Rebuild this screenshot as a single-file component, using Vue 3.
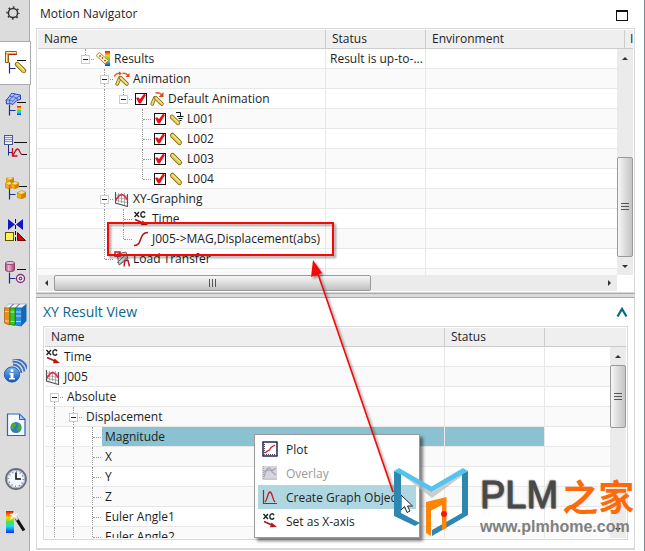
<!--
  Motion Navigator window
  Resource bar, motion tree, XY result view, context menu
-->
<template>
  <div class="app">
    <!-- shared icon symbols -->
    <svg class="defs" aria-hidden="true">
      <defs>
        <linearGradient id="rainbow" x1="0" y1="0" x2="0" y2="1">
          <stop offset="0" stop-color="#f00" /><stop offset=".3" stop-color="#ffd800" />
          <stop offset=".5" stop-color="#4be04b" /><stop offset=".7" stop-color="#18d8f0" /><stop offset="1" stop-color="#1030f0" />
        </linearGradient>
        <linearGradient id="blueBall" x1="0" y1="0" x2="0" y2="1">
          <stop offset="0" stop-color="#7db8ee" /><stop offset="1" stop-color="#0a50b8" />
        </linearGradient>
        <linearGradient id="pinkCan" x1="0" y1="0" x2="1" y2="0">
          <stop offset="0" stop-color="#a8487c" /><stop offset=".35" stop-color="#eab4d2" /><stop offset="1" stop-color="#9a3c70" />
        </linearGradient>
        <symbol id="cube" viewBox="0 0 8 8">
          <path d="M0 2.5L4 4v4L0 6.5z" fill="#f5b000" /><path d="M4 4l4-2v4L4 8z" fill="#cf8500" />
          <path d="M0 2.5L4 .5l4 1.5-4 2z" fill="#ffe07a" />
          <path d="M0 2.5L4 .5l4 1.5v4L4 8 0 6.5zM0 2.5L4 4l4-2M4 4v4" fill="none" stroke="#b87800" stroke-width=".5" />
        </symbol>
        <symbol id="link" viewBox="0 0 16 16">
          <path d="M4.5 4.5l7 7" stroke="#7a6008" stroke-width="5" stroke-linecap="round" />
          <path d="M4.5 4.5l7 7" stroke="#e8cd4c" stroke-width="3.4" stroke-linecap="round" />
          <path d="M4.6 3.8l7 7" stroke="#fff6b0" stroke-width="1" stroke-linecap="round" />
        </symbol>
        <symbol id="arms" viewBox="0 0 16 16">
          <path d="M2.5 12.5l3-7" stroke="#7a6008" stroke-width="4" stroke-linecap="round" />
          <path d="M2.5 12.5l3-7" stroke="#ecd67a" stroke-width="2.4" stroke-linecap="round" />
          <path d="M6.5 5.5l7 7" stroke="#7a6008" stroke-width="4.4" stroke-linecap="round" />
          <path d="M6.5 5.5l7 7" stroke="#e8cd6c" stroke-width="2.8" stroke-linecap="round" />
          <path d="M6.5 5l7 7" stroke="#fff6b0" stroke-width=".8" />
        </symbol>
        <symbol id="bracket" viewBox="0 0 24 24">
          <path d="M6.5 11.5v11M6.5 17.5h6" stroke="#1c2f8c" stroke-width="1.2" fill="none" />
        </symbol>

        <!-- resource bar -->
        <symbol id="gear" viewBox="0 0 24 24">
          <circle cx="10" cy="12" r="4.6" fill="none" stroke="#333" stroke-width="1.5" />
          <circle cx="10" cy="12" r="5.9" fill="none" stroke="#333" stroke-width="1.5" stroke-dasharray="1.7 2.93" stroke-dashoffset=".85" />
        </symbol>
        <symbol id="motion" viewBox="0 0 24 24">
          <path d="M2.5.5h11v3h-8v8h-3z" fill="#e8b04c" stroke="#9c5c10" />
          <path d="M3.5 1.5h10M3.5 4v7" stroke="#fff0b8" /><path d="M5.5 3.5h8" stroke="#a02810" />
          <path d="M14 9.5h9" stroke="#111" />
          <use href="#bracket" /><use href="#link" x="10" y="9" width="15" height="15" />
        </symbol>
        <symbol id="mesh" viewBox="0 0 24 24">
          <path d="M3 7C6 5 7 1.500 9 0c3 1 5 1.500 8.500 2v4.500C15 7 12 8 10 11.500 8 10.500 6 10.500 3.500 11z" fill="#a4bcfa" stroke="#2c3fb4" />
          <path d="M3 7c3 0 5 0 7 1.500C12 5 14 4.500 17 3M7 3.500c3 0 5 .5 7 2M6.500 7l.5 4M12 1l-5.500 6M14 5l.5 3" fill="none" stroke="#3c50c8" stroke-width=".8" />
          <path d="M14 9.500h9" stroke="#111" /><use href="#bracket" />
          <rect x="14" y="13" width="4" height="9" fill="url(#rainbow)" />
        </symbol>
        <symbol id="sheet" viewBox="0 0 24 24">
          <rect x="1.500" y=".5" width="8" height="9" fill="#eef0fa" stroke="#4c5490" />
          <path d="M2 2.500h7M2 4.500h7M2 6.500h7" stroke="#8890c0" /><path d="M11 7.500h13M19 19.500h5" stroke="#111" />
          <path d="M5.500 10v10.500M5.500 17.500h4" fill="none" stroke="#1c2f8c" />
          <path d="M9.500 13v8h5M10 20c2-1 2-6 4.500-6s2 5 4.500 5.500" fill="none" stroke="#c01020" stroke-width="1.300" />
        </symbol>
        <symbol id="cubes" viewBox="0 0 24 24">
          <use href="#cube" x="3" y="-1" width="8" height="8" /><use href="#cube" x="2" y="4" width="8" height="8" />
          <use href="#cube" x="8" y="4" width="8" height="8" /><path d="M16 9.500h8" stroke="#111" />
          <use href="#bracket" /><use href="#cube" x="14" y="13" width="9" height="9" />
        </symbol>
        <symbol id="mirror" viewBox="0 0 24 24">
          <path d="M5 0l7 5.500L5 11zM20 0l-7 5.500L20 11z" fill="#1414c8" />
          <path d="M12.500 0v24" stroke="#111" stroke-dasharray="4 2" />
          <rect x="2.500" y="13.500" width="8" height="8" fill="#fff04c" stroke="#5c5000" />
          <path d="M14.500 13.500v8h8z" fill="#c80c0c" stroke="#6c0808" />
        </symbol>
        <symbol id="barrel" viewBox="0 0 24 24">
          <path d="M2.500 2v7c0 2 9 2 9 0V2z" fill="url(#pinkCan)" stroke="#882c60" stroke-width=".8" />
          <ellipse cx="7" cy="2" rx="4.500" ry="1.600" fill="#f0c4dc" stroke="#882c60" stroke-width=".8" />
          <path d="M14 8.500h9" stroke="#111" /><use href="#bracket" />
          <circle cx="17.500" cy="17.500" r="4" fill="#fff" stroke="#882c78" stroke-width="1.400" />
          <circle cx="17.500" cy="17.500" r="1.400" fill="none" stroke="#882c78" stroke-width="1.200" />
        </symbol>
        <symbol id="books" viewBox="0 0 24 24">
          <path d="M1.500 5l4-4h18l-5 4z" fill="#eef4fa" stroke="#8c9cac" stroke-width=".6" />
          <path d="M1.500 5h5v17l-5-2z" fill="#f08c1c" stroke="#a85c08" stroke-width=".7" />
          <path d="M7 5h5v17.500l-5-1z" fill="#3cc428" stroke="#187808" stroke-width=".7" />
          <path d="M12.500 5h6v18l-6-1z" fill="#2c8ce0" stroke="#0c5094" stroke-width=".7" />
          <path d="M18.500 5l5-4v17l-5 5z" fill="#1468b8" /><path d="M6.500 5l4-4M12.500 5l4-4" stroke="#3c4c5c" />
          <path d="M2 8.500h4M2 18h4" stroke="#ffd898" /><path d="M7.500 9h4M7.500 18.500h4" stroke="#b8f4a0" /><path d="M13 9h5M13 13h5M13 18.500h5" stroke="#a8d8fc" />
        </symbol>
        <symbol id="info" viewBox="0 0 24 24">
          <path d="M10 5.500A9 9 0 0 1 18.500 14M9.500 2.500c7 0 11 4 12 10M9-.5C17-1 23 4 24.500 10" fill="none" stroke="#3c70c0" stroke-width="1.900" />
          <circle cx="9" cy="15.500" r="7.600" fill="url(#blueBall)" stroke="#1c5cac" />
          <circle cx="9" cy="11.500" r="1.500" fill="#fff" /><path d="M6.500 14h4v5H12v1.500H6V19h1.500v-3.500h-1z" fill="#fff" />
        </symbol>
        <symbol id="page" viewBox="0 0 24 24">
          <path d="M4.500 1h12l5.500 5.500V22.500H4.500z" fill="#f4faff" stroke="#2864c0" stroke-width="1.200" />
          <path d="M16.500 1v5.500H22z" fill="#a8ccf4" stroke="#2864c0" />
          <circle cx="13" cy="14.500" r="5.600" fill="#2c7cc8" />
          <path d="M9 11c2-2 4-1 4 1s-3 2-2 5c-3-1-4-4-2-6zM15 10c3 1 3 4 3 6l-3 3c-1-3-2-3 0-5z" fill="#4cac30" />
        </symbol>
        <symbol id="clock" viewBox="0 0 24 24">
          <circle cx="13" cy="12" r="10" fill="#f4f8fe" stroke="#68707c" stroke-width="1.800" />
          <circle cx="13" cy="12" r="8.600" fill="none" stroke="#a8b4c4" />
          <circle cx="13" cy="12" r="7.200" fill="none" stroke="#445" stroke-width="1.200" stroke-dasharray=".8 2.970" />
          <path d="M13 5.500V12h5" fill="none" stroke="#111" stroke-width="1.600" />
        </symbol>
        <symbol id="wand" viewBox="0 0 24 24">
          <rect x="3" y="1" width="8" height="22" fill="url(#rainbow)" />
          <path d="M13 8l8 12.500" stroke="#111" stroke-width="3.200" /><path d="M11.500 5.500l3 4.500" stroke="#c8c8c8" stroke-width="2.600" />
          <path d="M11 0l1 4 4-1-3 3 2 3-4-2-4 3 2-4-3-2 4-.5z" fill="#fff" opacity=".9" />
        </symbol>

        <!-- tree and menu -->
        <symbol id="results" viewBox="0 0 16 16">
          <rect x="10" y="0" width="5" height="15" fill="url(#rainbow)" />
          <path d="M1 4.500l3.500-3 9 8-3.500 3.500z" fill="#fff4d0" stroke="#c08c1c" />
          <path d="M4.500 4.500l1 1M7 6.500l1 1M9.500 9l1 1" stroke="#c02020" stroke-width="1.600" />
        </symbol>
        <symbol id="animation" viewBox="0 0 16 16">
          <use href="#arms" y="2" width="16" height="14" />
          <path d="M0 5.500C2 2.500 4 2 6 2.500M8.500 2.500C11 2 12.500 2.500 14 4.500" fill="none" stroke="#e86030" stroke-width="1.500" />
          <path d="M15.500 2v4h-4zM5 .5l3 2-3 2z" fill="#e04818" />
        </symbol>
        <symbol id="animationItem" viewBox="0 0 16 16">
          <use href="#arms" y="2" width="16" height="14" />
          <path d="M6.500 2C9 1.500 11 2 12.500 3.500" fill="none" stroke="#e86030" stroke-width="1.700" />
          <path d="M14.500 1v5h-5z" fill="#e04818" />
        </symbol>
        <symbol id="ground" viewBox="0 0 16 16">
          <use href="#link" x="0" y="2" width="14" height="14" />
          <path d="M8 1.500h4.500v4M9 5.500h6.500M10.500 7.500h4M11.500 9.500h2" fill="none" stroke="#111" />
        </symbol>
        <symbol id="graph" viewBox="0 0 16 16">
          <path d="M4.500 2v9.500M7.500 2v10M10.500 2v12M2 4l11.500 1M2 6.500l11.500 2M2 9.500l11.500 2" stroke="#999" stroke-width=".8" />
          <path d="M1.500 1v11l12 3.500V3" fill="none" stroke="#555" stroke-width="1.100" />
          <path d="M2 9c2-3 3-5.500 6-5.500 2 0 3 3 5.500 5" fill="none" stroke="#e8284c" stroke-width="1.700" />
        </symbol>
        <symbol id="axis" viewBox="0 0 16 16">
          <path d="M1.500 1l4.500 5M6 1L1.500 6" stroke="#222" stroke-width="1.400" />
          <path d="M12 2.200C11-.2 7.800.6 7.800 3.500s3.200 3.700 4.200 1.300" fill="none" stroke="#222" stroke-width="1.400" />
          <path d="M2 8.500l8 3.500" stroke="#a01818" stroke-width="1.500" /><path d="M9.500 9.500l5.500 4.500-7 .2z" fill="#c01414" />
        </symbol>
        <symbol id="curve" viewBox="0 0 16 16">
          <path d="M1 14.500c9 .5 4-13 14-13" fill="none" stroke="#b41418" stroke-width="1.500" />
        </symbol>
        <symbol id="load" viewBox="0 0 16 16">
          <path d="M3 3l9-2 2 7-9 6z" fill="#ccc" stroke="#666" /><path d="M3 12l9-9M5 14l9-8" stroke="#777" />
          <path d="M1 1h5v4H1zM10 15.500l1-6h3l1.500 6" fill="none" stroke="#b41c28" stroke-width="1.500" />
        </symbol>
        <symbol id="plot" viewBox="0 0 16 16">
          <rect x="1" y="1" width="14" height="14" fill="#fff" stroke="#141450" stroke-width="1.400" />
          <path d="M2.500 3v10.500H14" fill="none" stroke="#445" stroke-dasharray="1 1" />
          <path d="M3 12l2.500-2 2-1L9 6.500 13 4" fill="none" stroke="#c82020" stroke-width="1.300" />
        </symbol>
        <symbol id="overlay" viewBox="0 0 16 16">
          <rect x="0" y="1" width="15" height="14" fill="#d6d4dc" />
          <path d="M1.500 1v13H15" fill="none" stroke="#aaa8bc" stroke-dasharray="1 1" />
          <path d="M2 12C5 1 8 1 10 7l4 3M2 7c5-5 6 2 12-4" fill="none" stroke="#aaa4b8" stroke-width="1.200" />
        </symbol>
        <symbol id="create" viewBox="0 0 16 16">
          <path d="M1.500 1v13.500H15" fill="none" stroke="#c01818" stroke-width="1.200" />
          <path d="M3 13C6 10 5.500 3 8 3s2 7 5 10" fill="none" stroke="#c01818" stroke-width="1.300" />
        </symbol>
      </defs>
    </svg>

    <!-- resource bar -->
    <nav class="sidebar">
      <button v-for="t in tabs" :key="t.icon" :class="['tab', t.size, { active: tab === t.icon }]" :aria-label="t.label" @click="tab = t.icon">
        <svg class="tab-icon"><use :href="'#' + t.icon" /></svg>
      </button>
    </nav>

    <main class="main">
      <header class="title-bar">
        <h1>Motion Navigator</h1>
        <button class="maximize" aria-label="Maximize"></button>
      </header>

      <!-- motion tree -->
      <section class="grid-box">
        <div class="grid-body nav-body">
          <table class="tree">
            <colgroup><col class="nav-name" /><col class="col-status" /><col /></colgroup>
            <thead>
              <tr><th>Name</th><th>Status</th><th>Environment</th></tr>
            </thead>
            <tbody>
              <tr v-for="(row, i) in navRows" :key="i">
                <td>
                  <div class="node nav-node">
                    <span v-for="(g, n) in row.guides" :key="n" :class="['guide', 'g-' + g]"><button v-if="'xcb'.includes(g)" class="toggle" aria-label="Collapse"></button></span>
                    <label v-if="row.check !== undefined" class="check"><input v-model="row.check" type="checkbox" :aria-label="row.name" /></label>
                    <svg v-if="row.icon" class="icon"><use :href="'#' + row.icon" /></svg>
                    <span class="name">{{ row.name }}</span>
                  </div>
                </td>
                <td>{{ row.status }}</td>
                <td></td>
              </tr>
            </tbody>
          </table>
          <div class="side">
            <div class="side-head"><span class="next-col">I</span></div>
            <div class="vscroll">
              <button class="arrow up" aria-label="Scroll up"></button>
              <div class="vtrack nav-track"><div class="vthumb"><i class="grip"></i></div></div>
              <button class="arrow down" aria-label="Scroll down"></button>
            </div>
          </div>
        </div>
        <div class="hscroll">
          <button class="arrow left" aria-label="Scroll left"></button>
          <div class="htrack"><div class="hthumb"><i class="grip wide"></i></div></div>
          <button class="arrow right" aria-label="Scroll right"></button>
        </div>
      </section>

      <div class="splitter"></div>

      <!-- XY result view -->
      <section class="result">
        <header class="result-head">
          <h2>XY Result View</h2>
          <button class="collapse" aria-label="Collapse"><svg viewBox="0 0 12 12"><path d="M1.500 10.500L6 3l4.500 7.500" fill="none" stroke="#0b6786" stroke-width="2.200" /></svg></button>
        </header>
        <div class="grid-box">
          <div class="grid-body result-body">
            <table class="tree">
              <colgroup><col class="result-name" /><col class="col-status" /><col /></colgroup>
              <thead>
                <tr><th>Name</th><th>Status</th><th></th></tr>
              </thead>
              <tbody>
                <tr v-for="row in resultRows" :key="row.name" :class="{ selected: row.name === selected }" @click="selected = row.name">
                  <td>
                    <div class="node">
                      <span v-for="(g, n) in row.guides" :key="n" :class="['guide', 'g-' + g]"><button v-if="'xcb'.includes(g)" class="toggle" aria-label="Collapse"></button></span>
                      <svg v-if="row.icon" class="icon"><use :href="'#' + row.icon" /></svg>
                      <span class="name">{{ row.name }}</span>
                    </div>
                  </td>
                  <td></td>
                  <td></td>
                </tr>
              </tbody>
            </table>
            <div class="side">
              <div class="side-head"></div>
              <div class="vscroll">
                <button class="arrow up" aria-label="Scroll up"></button>
                <div class="vtrack"><div class="vthumb short"><i class="grip"></i></div></div>
                <button class="arrow down" aria-label="Scroll down"></button>
              </div>
            </div>
          </div>
        </div>
      </section>
    </main>

    <!-- context menu -->
    <div class="menu" role="menu">
      <button v-for="m in menu" :key="m.text" role="menuitem" :disabled="m.disabled" :class="{ hover: m.icon === 'create' }">
        <svg class="icon"><use :href="'#' + m.icon" /></svg>{{ m.text }}
      </button>
    </div>

    <!-- callout box and arrow -->
    <svg class="callout" viewBox="0 0 310 300" aria-hidden="true">
      <rect x="8" y="8" width="225" height="32" fill="none" stroke="#f40808" stroke-width="2" />
      <path d="M293 277L217 56" stroke="#f40808" stroke-width="1.600" />
      <path d="M213 45l9 13-11 4z" fill="#f40808" />
    </svg>
    <svg class="cursor" viewBox="0 0 14 20" aria-hidden="true">
      <path d="M1 1v15l3.500-3.500L7 18.500l3-1.500-2.500-5h5z" fill="#fff" stroke="#223" />
    </svg>

    <!-- watermark -->
    <div class="watermark">
      <svg class="mark" viewBox="0 0 76 70" aria-hidden="true">
        <path d="M7 6l31 18L68 6v2L38 30z" fill="#b8b8b8" opacity=".7" />
        <path d="M0 3l7 3v39l19 10-5 3L0 48zM74 3l-6 3v39L38 62v6l36-21z" fill="#2d87ae" />
        <path d="M0 3l5-3 32.500 18.500L69 0l5 3-36.500 21L6 6z" fill="#54c4ee" />
        <path d="M32 34l5 3v31l-5-3zM32 34l20.500-5v31L48 62V37l-11 5.500V37z" fill="#ff8408" />
        <circle cx="50" cy="46" r="3" fill="#f01818" />
      </svg>
      <div class="mark-text">
        <div class="brand"><span class="latin">PLM</span><span class="han">之家</span></div>
        <div class="site">www.plmhome.com</div>
      </div>
    </div>
  </div>
</template>

<script setup>
import { ref } from 'vue'

const tab = ref('motion')
const selected = ref('Magnitude')

const tabs = [
  { icon: 'gear', label: 'Settings', size: 'first' },
  { icon: 'motion', label: 'Motion Navigator' },
  { icon: 'mesh', label: 'Simulation' },
  { icon: 'sheet', label: 'Post Processing' },
  { icon: 'cubes', label: 'Assembly Navigator' },
  { icon: 'mirror', label: 'Constraint Navigator' },
  { icon: 'barrel', label: 'Part Navigator' },
  { icon: 'books', label: 'Reuse Library', size: 'last' },
  { icon: 'info', label: 'HD3D Tools', size: 'tall' },
  { icon: 'page', label: 'Web Browser', size: 'tall' },
  { icon: 'clock', label: 'History', size: 'tall' },
  { icon: 'wand', label: 'System Materials', size: 'low' },
]

// guides: v line, t branch, l last branch, x/c/b toggle with line both ways/above/below, o empty
const navRows = ref([
  { guides: 'c', icon: 'results', name: 'Results', status: 'Result is up-to-...' },
  { guides: 'ox', icon: 'animation', name: 'Animation' },
  { guides: 'ovc', check: true, icon: 'animationItem', name: 'Default Animation' },
  { guides: 'ovot', check: true, icon: 'ground', name: 'L001' },
  { guides: 'ovot', check: true, icon: 'link', name: 'L002' },
  { guides: 'ovot', check: true, icon: 'link', name: 'L003' },
  { guides: 'ovol', check: true, icon: 'link', name: 'L004' },
  { guides: 'ox', icon: 'graph', name: 'XY-Graphing' },
  { guides: 'ovt', icon: 'axis', name: 'Time' },
  { guides: 'ovl', icon: 'curve', name: 'J005->MAG,Displacement(abs)' },
  { guides: 'ol', icon: 'load', name: 'Load Transfer' },
  { guides: '', name: '' },
])

const resultRows = [
  { guides: '', icon: 'axis', name: 'Time' },
  { guides: '', icon: 'graph', name: 'J005' },
  { guides: 'b', name: 'Absolute' },
  { guides: 'vx', name: 'Displacement' },
  { guides: 'vvt', name: 'Magnitude' },
  { guides: 'vvt', name: 'X' },
  { guides: 'vvt', name: 'Y' },
  { guides: 'vvt', name: 'Z' },
  { guides: 'vvt', name: 'Euler Angle1' },
  { guides: 'vvt', name: 'Euler Angle2' },
]

const menu = [
  { icon: 'plot', text: 'Plot' },
  { icon: 'overlay', text: 'Overlay', disabled: true },
  { icon: 'create', text: 'Create Graph Object' },
  { icon: 'axis', text: 'Set as X-axis' },
]
</script>

<style>
body { background: #fff; }
</style>

<style scoped>
.app { position: relative; display: flex; min-height: 100vh; overflow: hidden; font-family: "Open Sans", "Noto Sans", "Noto Sans CJK SC", sans-serif; font-size: 12px; color: #1e1e1e; }
.app *, .app *::before, .app *::after { box-sizing: border-box; }
.defs { position: absolute; width: 0; height: 0; }
button { padding: 0; border: 0; background: none; font: inherit; color: inherit; }
h1, h2 { margin: 0; font-weight: normal; }

/* resource bar */
.sidebar { flex: none; width: 30px; background: #dcdcdc; border-right: 1px solid #aaa; }
.tab { display: flex; align-items: center; width: 30px; height: 42px; padding-left: 3px; }
.tab-icon { width: 24px; height: 24px; overflow: visible; }
.tab.first { height: 40px; align-items: flex-start; padding-top: 1px; margin-bottom: 2px; }
.tab.last { margin-bottom: 8px; }
.tab.active { background: #fff; outline: 1px solid #aaa; }
.tab.tall { height: 54px; }
.tab.low { height: 32px; }

/* window */
.main { flex: 1; min-width: 0; padding: 0 9px 0 6px; border-right: 1px solid #7c8794; }
.title-bar { display: flex; align-items: center; justify-content: space-between; height: 28px; padding: 0 7px 0 4px; }
.title-bar h1 { font-size: 12px; line-height: 28px; }
.maximize { width: 12px; height: 11px; border: 1px solid #111; border-top-width: 2px; margin-top: 3px; }

/* tree tables */
.grid-box { border: 1px solid #d8d8d8; padding: 1px; background: #fff; }
.grid-body { display: flex; overflow: hidden; }
.nav-body { height: 245px; }
.result-body { height: 210px; }
.tree { flex: 1; min-width: 0; width: 100%; height: max-content; table-layout: fixed; border-collapse: separate; border-spacing: 0; }
.nav-name { width: 288px; }
.result-name { width: 400px; }
.col-status { width: 100px; }
.tree th { height: 19px; padding: 0 6px; background: #efefef; border-right: 1px solid #ccc; border-bottom: 1px solid #ccc; font-weight: normal; line-height: 18px; text-align: left; }
.tree th:last-child { border-right: 0; }
.tree td { height: 20px; padding: 0 4px; border-right: 1px solid #e8e8e8; border-bottom: 1px solid #e8e8e8; line-height: 19px; white-space: nowrap; overflow: hidden; }
.tree td:first-child { padding: 0; }
.tree td:last-child { border-right: 0; }
.tree tr:nth-child(even) td { background: #fafafa; }
.node { display: flex; align-items: center; height: 19px; }
.nav-node { padding-left: 38px; }
.name { flex: 1; padding-left: 3px; }
.icon { flex: none; width: 16px; height: 16px; }
.selected .name, .tree .selected td:nth-child(2) { background: #8bc2d1; }

/* guide lines */
.guide { position: relative; flex: none; display: flex; align-items: center; justify-content: center; width: 19px; height: 20px; margin-bottom: -1px; }
.guide::before, .guide::after { content: ''; position: absolute; }
.guide::before { left: 9px; top: 0; bottom: 0; border-left: 1px dotted #999; }
.guide::after { left: 10px; right: 1px; top: 10px; border-top: 1px dotted #999; }
.g-o::before, .g-o::after, .g-v::after { display: none; }
.g-l::before, .g-c::before { bottom: 10px; }
.g-b::before { top: 10px; }
.toggle { position: relative; z-index: 1; width: 9px; height: 9px; border: 1px solid #ccc; background: linear-gradient(#222, #222) center / 5px 1px no-repeat #fff; }

.check { display: flex; flex: none; justify-content: center; width: 16px; }
.check input { appearance: none; width: 12px; height: 12px; margin: 0; border: 1px solid #111; background: #fff; }
.check input:checked::before { content: ''; display: block; width: 10px; height: 10px; background: #e4141c; clip-path: polygon(0 45%, 22% 38%, 40% 55%, 82% 0, 100% 14%, 48% 100%, 30% 100%); }

/* scroll bars */
.side { flex: none; display: flex; flex-direction: column; width: 16px; }
.side-head { flex: none; height: 19px; background: #efefef; border-bottom: 1px solid #ccc; overflow: hidden; }
.next-col { display: block; margin-left: 7px; padding-left: 5px; border-left: 1px solid #ccc; line-height: 18px; }
.vscroll { flex: 1; display: flex; flex-direction: column; background: #ebebeb; }
.vtrack { flex: 1; display: flex; flex-direction: column; }
.nav-track { justify-content: flex-end; }
.vthumb { display: flex; align-items: center; justify-content: center; height: 100px; border: 1px solid #999; border-radius: 2px; background: linear-gradient(90deg, #f6f6f6, #dcdcdc 50%, #c4c4c8); }
.vthumb.short { height: 63px; }
.grip { width: 8px; height: 8px; background: repeating-linear-gradient(#555 0 1px, transparent 1px 3px); }
.grip.wide { background: repeating-linear-gradient(90deg, #555 0 1px, transparent 1px 3px); }
.hscroll { display: flex; height: 16px; margin-right: 16px; background: #ebebeb; }
.htrack { flex: 1; }
.hthumb { display: flex; align-items: center; justify-content: center; width: 58%; height: 16px; border: 1px solid #999; border-radius: 2px; background: linear-gradient(#f6f6f6, #dcdcdc 50%, #c0c0c4); }
.arrow { flex: none; display: flex; align-items: center; justify-content: center; width: 16px; height: 18px; }
.arrow::before { content: ''; border: 3px solid transparent; }
.up::before { border-top: 0; border-bottom-color: #333; }
.down::before { border-bottom: 0; border-top-color: #333; }
.left, .right { height: 16px; }
.left::before { border-left: 0; border-right-color: #333; }
.right::before { border-right: 0; border-left-color: #333; }

.splitter { height: 5px; background: #dcdcdc; border-top: 1px solid #aaa; border-bottom: 1px solid #aaa; }

/* XY result view */
.result { padding: 0 6px 8px; border: solid #d8d8d8; border-width: 0 1px 2px; }
.result-head { display: flex; align-items: center; justify-content: space-between; height: 28px; }
.result-head h2 { font-size: 14px; line-height: 26px; color: #0b6786; }
.collapse { width: 12px; height: 12px; }
.collapse svg { display: block; width: 12px; height: 12px; }

/* context menu */
.menu { position: absolute; left: 254px; top: 434px; width: 166px; padding: 2px 3px 4px; border: 1px solid #999; background: #fff; box-shadow: 3px 3px 3px rgba(0, 0, 0, 0.5); }
.menu button { display: flex; align-items: center; gap: 8px; width: 100%; height: 24px; padding-left: 4px; white-space: nowrap; }
.menu button:disabled { color: #999; }
.menu .hover { background: #b0d7e1; }

.callout { position: absolute; left: 100px; top: 215px; width: 310px; height: 300px; pointer-events: none; filter: drop-shadow(2px 2px 1px rgba(0, 0, 0, 0.4)); }
.cursor { position: absolute; left: 400px; top: 494px; width: 14px; height: 20px; }

/* watermark */
.watermark { position: absolute; left: 394px; top: 468px; display: flex; gap: 10px; pointer-events: none; }
.mark { flex: none; width: 76px; height: 70px; }
.mark-text { padding-top: 5px; white-space: nowrap; font-family: "Liberation Sans", "Noto Sans CJK SC", sans-serif; }
.brand { display: flex; align-items: center; gap: 4px; height: 44px; }
.latin { font-size: 38px; line-height: 44px; color: #484848; -webkit-text-stroke: 1px #484848; text-shadow: 0 0 2px #aaa, 1px 1px 2px #aaa, -1px -1px 2px #bbb; }
.han { font-family: "Noto Sans CJK SC", sans-serif; font-size: 36px; font-weight: bold; line-height: 44px; color: #ff6a08; }
.site { font-size: 16px; font-weight: bold; line-height: 20px; color: #808080; }
</style>
